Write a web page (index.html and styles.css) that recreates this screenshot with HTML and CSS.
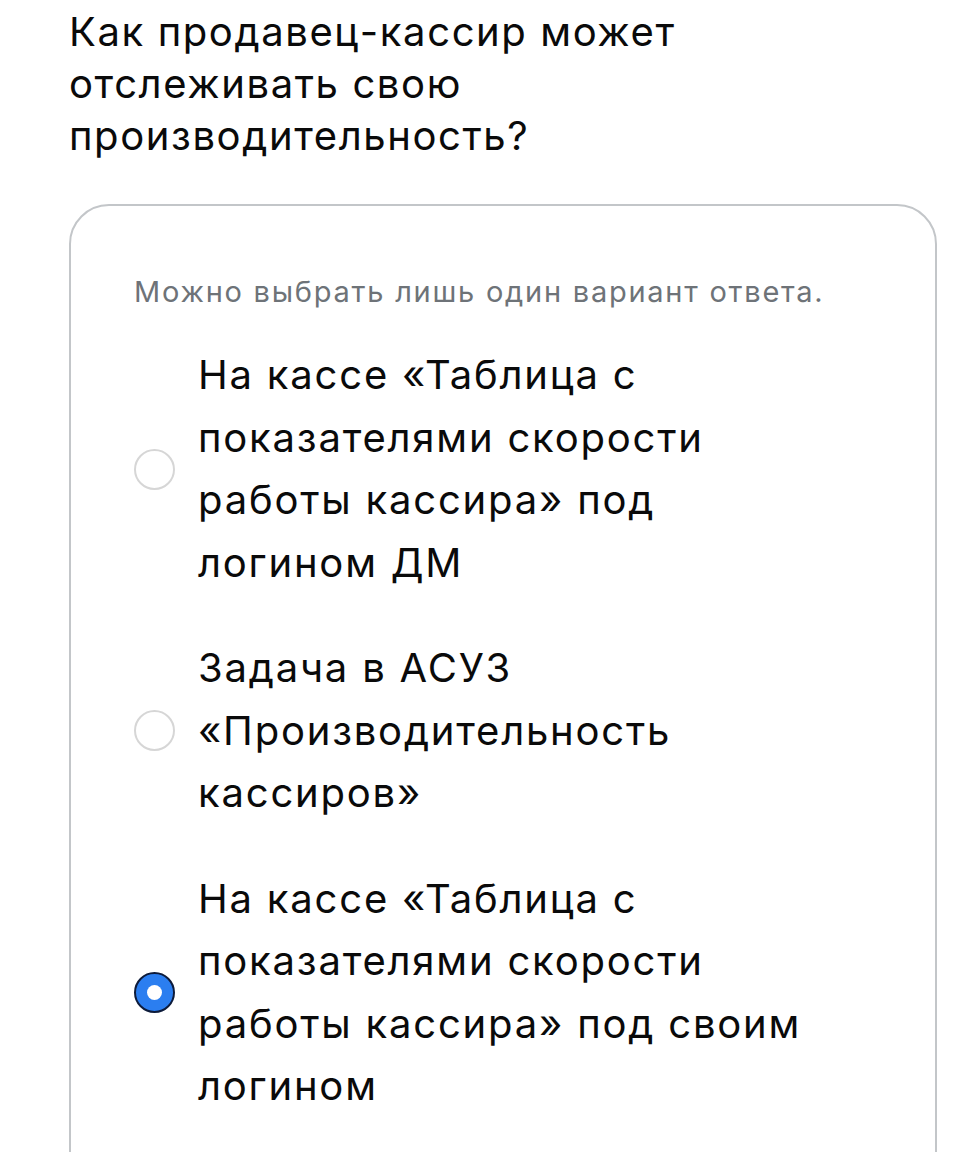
FILE: index.html
```html
<!DOCTYPE html>
<html lang="ru">
<head>
<meta charset="utf-8">
<link rel="stylesheet" href="styles.css">
</head>
<body>
<div class="page">
  <h1 class="question">Как продавец-кассир может отслеживать свою производительность?</h1>
  <div class="card">
    <p class="hint">Можно выбрать лишь один вариант ответа.</p>
    <div class="options">
      <label class="option">
        <span class="radio"></span>
        <span class="option-text">На кассе «Таблица с показателями скорости работы кассира» под логином ДМ</span>
      </label>
      <label class="option">
        <span class="radio"></span>
        <span class="option-text">Задача в АСУЗ «Производительность кассиров»</span>
      </label>
      <label class="option">
        <span class="radio checked"></span>
        <span class="option-text">На кассе «Таблица с показателями скорости работы кассира» под своим логином</span>
      </label>
    </div>
  </div>
</div>
</body>
</html>
```
FILE: styles.css
```css
html, body {
  margin: 0;
  padding: 0;
  background: #ffffff;
}
body {
  font-family: Inter, "Noto Sans", "DejaVu Sans", sans-serif;
  color: #0a0a0a;
}
.page {
  padding: 6px 39px 0 69px;
}
.question {
  margin: 0;
  font-size: 40px;
  font-weight: 400;
  line-height: 52px;
  letter-spacing: 1.6px;
  width: 640px;
}
.card {
  margin-top: 42px;
  border: 2px solid #c3c6c9;
  border-radius: 40px;
  padding: 68px 62px 60px 63px;
  min-height: 1000px;
}
.hint {
  margin: 0;
  font-size: 29px;
  line-height: 36px;
  letter-spacing: 1.75px;
  color: #6e7378;
  white-space: nowrap;
}
.options {
  margin-top: 34px;
  display: flex;
  flex-direction: column;
  gap: 43px;
}
.option {
  display: flex;
  align-items: center;
  gap: 23px;
}
.radio {
  flex: none;
  width: 41px;
  height: 41px;
  box-sizing: border-box;
  border: 2px solid #d6d6d6;
  border-radius: 50%;
  background: #fff;
  position: relative;
}
.radio.checked {
  border: 2px solid #0d1b3a;
  background: #2b7ef0;
}
.radio.checked::after {
  content: "";
  position: absolute;
  left: 50%;
  top: 50%;
  width: 15px;
  height: 15px;
  margin: -7.5px 0 0 -7.5px;
  border-radius: 50%;
  background: #ffffff;
}
.option-text {
  font-size: 40px;
  line-height: 62.5px;
  letter-spacing: 1.8px;
  max-width: 630px;
}
```
